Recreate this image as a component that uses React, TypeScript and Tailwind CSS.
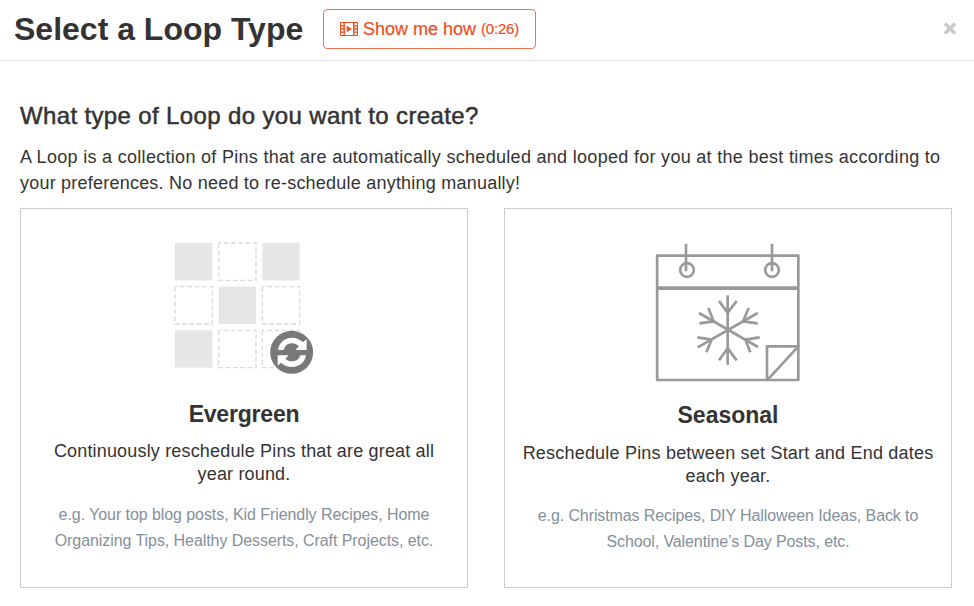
import React from "react";

function FilmIcon() {
  return (
    <svg width="18" height="14" viewBox="0 0 18 14" fill="none" stroke="currentColor">
      <path d="M0.5 0.5H17.5V13.5H0.5Z" />
      <path d="M4.2 0.5V13.5M13.8 0.5V13.5" strokeWidth="1.4" />
      <path d="M0.5 3.9H4M0.5 7H4M0.5 10.1H4M14 3.9H17.5M14 7H17.5M14 10.1H17.5" strokeWidth="1.4" />
      <path d="M6.7 3.8V10.200L12 7Z" fill="currentColor" stroke="none" />
    </svg>
  );
}

function EvergreenArt() {
  const filled = [[45, 39], [307, 39], [176, 170], [45, 301]];
  const dashed = [[176, 39], [45, 170], [307, 170], [176, 301], [307, 301]];

  return (
    <svg width="142" height="135" viewBox="39 30 426 405" fill="none">
      {filled.map(([x, y]) => (
        <rect key={`${x}-${y}`} x={x} y={y} width="112" height="112" fill="#e6e6e6" />
      ))}
      {dashed.map(([x, y]) => (
        <rect
          key={`${x}-${y}`}
          x={x}
          y={y}
          width="112"
          height="112"
          stroke="#dadada"
          strokeWidth="4"
          strokeDasharray="14 8"
          strokeDashoffset="7"
        />
      ))}
      <circle cx="395" cy="367" r="64.5" fill="#787878" />
      <g fill="#fff">
        <path d="M354 360C357 338 374 323 396 323C409 323 420 328 429 337L440 328V360H406L417 349C411 343 404 340 396 340C383 340 374 348 371 360Z" />
        <path d="M438 376C435 397 418 411 396 411C383 411 372 406 363 398L353 407V376H386L376 386C381 391 388 394 396 394C409 394 418 387 421 376Z" />
      </g>
    </svg>
  );
}

function SeasonalArt() {
  return (
    <svg width="150" height="145" viewBox="39 15 450 435" fill="none" stroke="#999" strokeWidth="8">
      <rect x="51.5" y="62" width="423.5" height="373" strokeLinejoin="round" />
      <path d="M51 159.500H475" strokeWidth="11.500" />
      <path d="M138 26V109M396 26V109" />
      <circle cx="141" cy="105" r="20.500" />
      <circle cx="396" cy="105" r="20.500" />
      <path d="M381 435V334H475L384 433" strokeLinejoin="round" />
      <path d="M263 181V389M177 234L354 336M353 234L173 337" />
      <path d="M237 198L263 233L290 198M237 376L263 340L290 376" />
      <path d="M205 219L221 259L178 265M326 219L309 259L353 265" />
      <path d="M172 307L215 314L199 352M359 307L316 314L331 352" />
    </svg>
  );
}

export default function App() {
  return (
    <div className="h-[606px] w-[974px] overflow-hidden bg-white font-['Liberation_Sans',Arial,sans-serif] text-[#333]">
      <header className="flex h-[61px] items-start border-b border-[#e9e9e9] pl-[14px] pr-[17px]">
        <h1 className="mt-[9px] w-[309px] whitespace-nowrap text-[32px] font-bold leading-10">Select a Loop Type</h1>
        <button className="mt-[9px] flex h-[40px] w-[213px] items-center whitespace-nowrap rounded border border-[#f2704f] pl-4 text-[#ee4d1e]">
          <FilmIcon />
          <span className="ml-[5px] text-[18px] [-webkit-text-stroke:0.2px]">Show me how</span>
          <span className="ml-[5px] text-[15px] tracking-[-0.2px] [-webkit-text-stroke:0.2px]">(0:26)</span>
        </button>
        <button className="ml-auto mt-[22px] text-[#c8c8c8]" aria-label="Close">
          <svg width="14" height="13" viewBox="0 0 14 13" stroke="currentColor" strokeWidth="3.400">
            <path d="M2 1.500L12 11.500M12 1.500L2 11.500" />
          </svg>
        </button>
      </header>

      <main className="px-5 pt-[39px]">
        <h2 className="text-[24px] leading-8 tracking-[0.36px] [-webkit-text-stroke:0.5px_#333]">What type of Loop do you want to create?</h2>
        <p className="mt-3 whitespace-nowrap text-[18px] leading-[26px] tracking-[0.3px]">
          A Loop is a collection of Pins that are automatically scheduled and looped for you at the best times according to
          <br />
          <span className="tracking-[0.22px]">your preferences. No need to re-schedule anything manually!</span>
        </p>

        <div className="mt-3 flex gap-9 text-center">
          <section className="flex h-[380px] w-[448px] flex-col items-center whitespace-nowrap border border-[#ccc] pt-[31px]">
            <EvergreenArt />
            <h3 className="mt-6 text-[23px] font-bold leading-[30px] tracking-[-0.2px]">Evergreen</h3>
            <p className="mt-[11px] text-[18px] leading-[23px] tracking-[0.17px]">
              Continuously reschedule Pins that are great all
              <br />
              year round.
            </p>
            <p className="mt-4 text-[16px] leading-[26px] tracking-[-0.07px] text-[#84909a]">
              e.g. Your top blog posts, Kid Friendly Recipes, Home
              <br />
              Organizing Tips, Healthy Desserts, Craft Projects, etc.
            </p>
          </section>

          <section className="flex h-[380px] w-[448px] flex-col items-center whitespace-nowrap border border-[#ccc] pt-[31px]">
            <SeasonalArt />
            <h3 className="mt-[15px] text-[23px] font-bold leading-[30px]">Seasonal</h3>
            <p className="mt-3 text-[18px] leading-[23px] tracking-[0.2px]">
              Reschedule Pins between set Start and End dates
              <br />
              each year.
            </p>
            <p className="mt-[15px] text-[16px] leading-[26px] tracking-[-0.1px] text-[#84909a]">
              e.g. Christmas Recipes, DIY Halloween Ideas, Back to
              <br />
              School, Valentine’s Day Posts, etc.
            </p>
          </section>
        </div>
      </main>
    </div>
  );
}
